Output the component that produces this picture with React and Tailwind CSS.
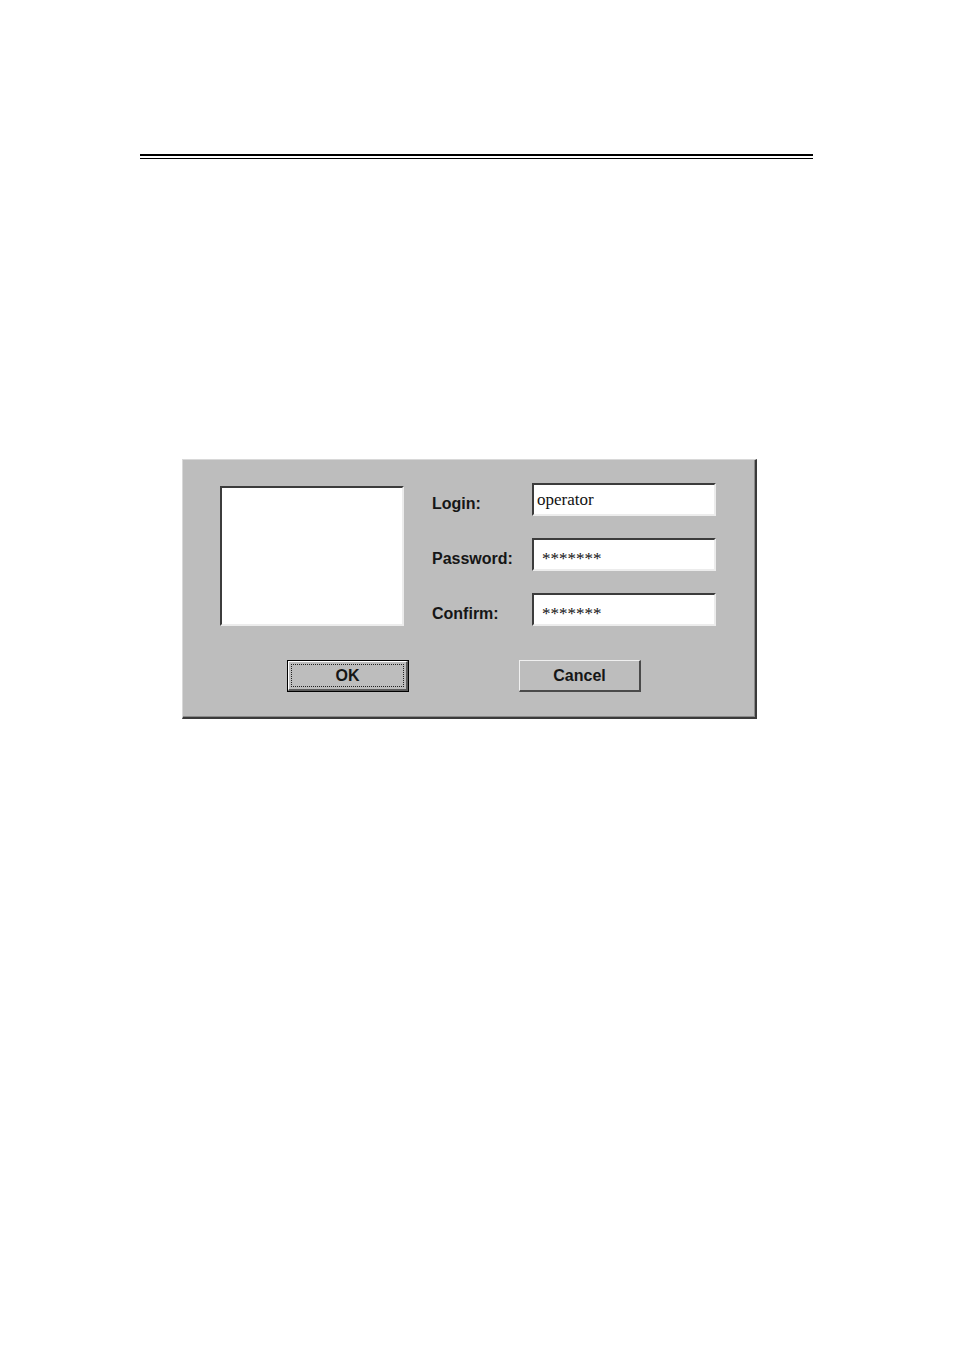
const FIELDS = [
  { label: 'Login:', value: 'operator', pad: 'pl-[3px] pb-[1px]', size: 'text-[17px]' },
  { label: 'Password:', value: '*******', pad: 'pl-[8px] pt-[7px]', size: 'text-[17px]' },
  { label: 'Confirm:', value: '*******', pad: 'pl-[8px] pt-[7px]', size: 'text-[17px]' },
]

function Sunken({ className, children }) {
  return (
    <div className={`bg-white border-2 border-t-[#3c3c3c] border-l-[#3c3c3c] border-b-[#ececec] border-r-[#ececec] ${className}`}>
      {children}
    </div>
  )
}

export default function App() {
  return (
    <div className="w-[954px] h-[1350px] bg-white pt-[154px]" style={{ fontFamily: '"Liberation Sans", Arial, sans-serif' }}>
      {/* double rule */}
      <div className="ml-[140px] w-[673px] flex flex-col gap-[2px]">
        <div className="h-[1.5px] bg-black" />
        <div className="h-[1.5px] bg-black" />
      </div>

      {/* dialog */}
      <div className="ml-[182px] mt-[300px] w-[575px] h-[260px] bg-[#bdbdbd] border-t border-l border-t-[#d8d8d8] border-l-[#d8d8d8] border-r-2 border-b-2 border-r-[#3a3a3a] border-b-[#3a3a3a] shadow-[inset_-1px_-1px_0_#8a8a8a]">
        <div className="flex pl-[37px] pt-[23px]">
          <Sunken className="mt-[3px] w-[184px] h-[140px]" />
          <div className="ml-[28px] flex flex-col gap-[22px]">
            {FIELDS.map(f => (
              <div key={f.label} className="flex items-center h-[33px]">
                <span className="w-[100px] pt-[8px] text-[16px] font-bold text-[#161616] leading-none">{f.label}</span>
                <Sunken className={`w-[184px] h-[33px] flex items-center ${f.pad}`}>
                  <span className={`${f.size} text-[#111] leading-none`} style={{ fontFamily: '"Liberation Serif", "Times New Roman", serif' }}>
                    {f.value}
                  </span>
                </Sunken>
              </div>
            ))}
          </div>
        </div>

        <div className="flex mt-[34px] pl-[104px] gap-[110px]">
          <button className="w-[122px] h-[32px] border border-black bg-[#bdbdbd] p-0">
            <div className="w-full h-full border-t border-l border-t-white border-l-white border-b-2 border-r-2 border-b-[#5a5a5a] border-r-[#5a5a5a] p-[2px]">
              <div className="w-full h-full border border-dotted border-[#222] flex items-center justify-center text-[16px] font-bold text-[#161616]">
                OK
              </div>
            </div>
          </button>
          <button className="w-[122px] h-[32px] bg-[#bdbdbd] border-t border-l border-t-[#f0f0f0] border-l-[#f0f0f0] border-b-2 border-r-2 border-b-[#4a4a4a] border-r-[#4a4a4a] flex items-center justify-center text-[16px] font-bold text-[#161616]">
            Cancel
          </button>
        </div>
      </div>
    </div>
  )
}
